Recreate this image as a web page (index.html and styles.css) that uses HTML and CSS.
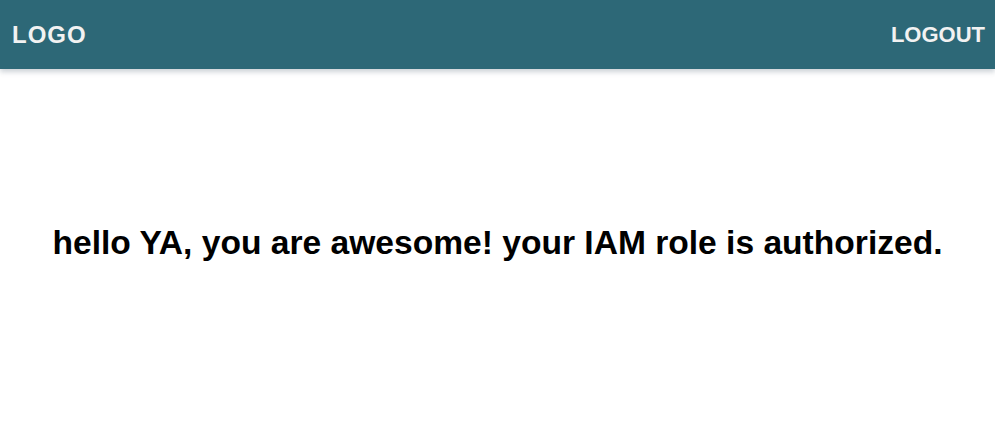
FILE: index.html
```html
<!DOCTYPE html>
<html>
<head>
<meta charset="utf-8">
<link rel="stylesheet" href="styles.css">
</head>
<body>
<header class="topbar">
  <div class="logo">LOGO</div>
  <div class="logout">LOGOUT</div>
</header>
<main class="content">
  <h1 class="message">hello YA, you are awesome! your IAM role is authorized.</h1>
</main>
</body>
</html>
```
FILE: styles.css
```css
html, body {
  margin: 0;
  padding: 0;
  background: #ffffff;
  font-family: "Liberation Sans", Arial, sans-serif;
}
.topbar {
  height: 69px;
  background: #2d6877;
  display: flex;
  align-items: center;
  justify-content: space-between;
  padding: 0 10px 0 12px;
  box-shadow: 0 3px 5px rgba(60, 80, 100, 0.25);
  color: #f2f2f2;
  font-weight: 700;
  font-size: 22px;
}
.logo {
  font-size: 24px;
  letter-spacing: 1px;
}
.content {
  display: flex;
  justify-content: center;
  padding-top: 154px;
}
.message {
  margin: 0;
  font-size: 33.6px;
  font-weight: 700;
  color: #000;
  line-height: 40px;
}
```
